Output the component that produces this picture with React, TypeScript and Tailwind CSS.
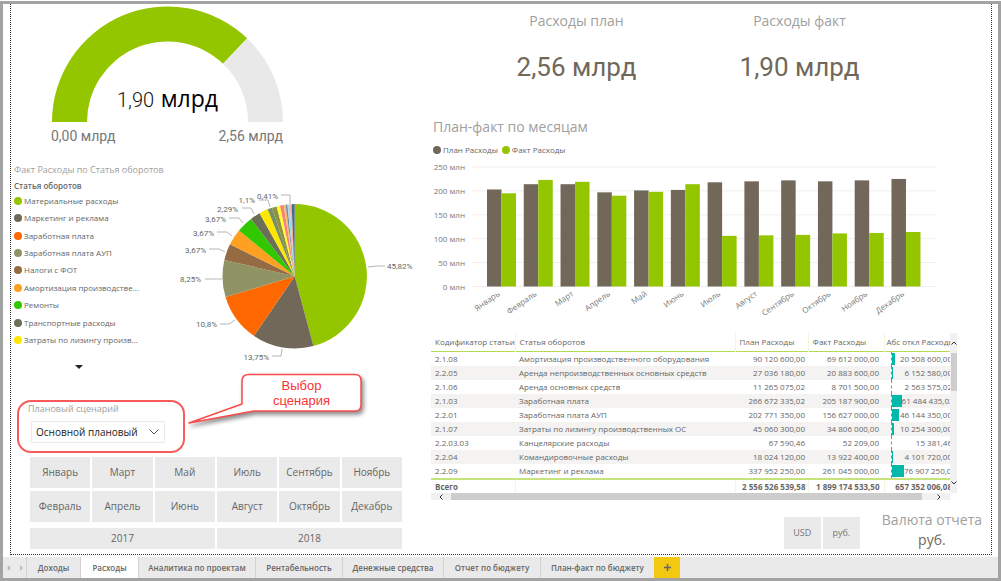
import React from "react";

type Slice = { value: number; color: string };

const slices: Slice[] = [
  { value: 45.82, color: "#94c600" },
  { value: 13.75, color: "#71685a" },
  { value: 10.8, color: "#ff6700" },
  { value: 8.25, color: "#909465" },
  { value: 3.67, color: "#956b43" },
  { value: 3.67, color: "#fea022" },
  { value: 3.67, color: "#32c800" },
  { value: 2.29, color: "#6b6f55" },
  { value: 1.97, color: "#ffe600" },
  { value: 1.02, color: "#759063" },
  { value: 1.07, color: "#91923f" },
  { value: 0.76, color: "#fdfd30" },
  { value: 0.82, color: "#ff7f7c" },
  { value: 0.44, color: "#f2c168" },
  { value: 0.39, color: "#6f8ea6" },
  { value: 0.5, color: "#a5d8ea" },
  { value: 0.44, color: "#f9a99f" },
  { value: 0.67, color: "#4a6a85" },
];

const pieLabels = [
  { text: "45,82%", x: 387, y: 269, anchor: "start", line: "368,267 376,266 385,266" },
  { text: "13,75%", x: 269, y: 360, anchor: "end", line: "282,349 281,356 272,356" },
  { text: "10,8%", x: 217, y: 327, anchor: "end", line: "235,320 229,324 220,324" },
  { text: "8,25%", x: 201, y: 282, anchor: "end", line: "222,279 205,279" },
  { text: "3,67%", x: 206, y: 253, anchor: "end", line: "225,252 219,249 209,249" },
  { text: "3,67%", x: 214, y: 236, anchor: "end", line: "232,236 227,232 217,232" },
  { text: "3,67%", x: 226, y: 222, anchor: "end", line: "243,223 239,218 229,218" },
  { text: "2,29%", x: 238, y: 212, anchor: "end", line: "254,214 251,208 242,208" },
  { text: "1,1%", x: 255, y: 203, anchor: "end", line: "270,207 268,200 259,200" },
  { text: "0,41%", x: 278, y: 199, anchor: "end", line: "290,204 290,195 281,195" },
] as const;

const legend = [
  { name: "Материальные расходы", dot: "bg-[#94c600]" },
  { name: "Маркетинг и реклама", dot: "bg-[#71685a]" },
  { name: "Заработная плата", dot: "bg-[#ff6700]" },
  { name: "Заработная плата АУП", dot: "bg-[#909465]" },
  { name: "Налоги с ФОТ", dot: "bg-[#956b43]" },
  { name: "Амортизация производстве...", dot: "bg-[#fea022]" },
  { name: "Ремонты", dot: "bg-[#32c800]" },
  { name: "Транспортные расходы", dot: "bg-[#6b6f55]" },
  { name: "Затраты по лизингу произв...", dot: "bg-[#ffe600]" },
];

const months = [
  { name: "Январь", plan: 203, fact: 195 },
  { name: "Февраль", plan: 214, fact: 223 },
  { name: "Март", plan: 214, fact: 219 },
  { name: "Апрель", plan: 197, fact: 190 },
  { name: "Май", plan: 201, fact: 198 },
  { name: "Июнь", plan: 202, fact: 214 },
  { name: "Июль", plan: 218, fact: 106 },
  { name: "Август", plan: 220, fact: 107 },
  { name: "Сентябрь", plan: 222, fact: 108 },
  { name: "Октябрь", plan: 220, fact: 111 },
  { name: "Ноябрь", plan: 222, fact: 112 },
  { name: "Декабрь", plan: 225, fact: 114 },
];

const monthButtons = [
  "Январь", "Март", "Май", "Июль", "Сентябрь", "Ноябрь",
  "Февраль", "Апрель", "Июнь", "Август", "Октябрь", "Декабрь",
];

const rows = [
  { code: "2.1.08", name: "Амортизация производственного оборудования", plan: "90 120 600,00", fact: "69 612 000,00", diff: "20 508 600,00", m: 20.5 },
  { code: "2.2.05", name: "Аренда непроизводственных основных средств", plan: "27 036 180,00", fact: "20 883 600,00", diff: "6 152 580,00", m: 6.2 },
  { code: "2.1.06", name: "Аренда основных средств", plan: "11 265 075,02", fact: "8 701 500,00", diff: "2 563 575,02", m: 0 },
  { code: "2.1.03", name: "Заработная плата", plan: "266 672 335,02", fact: "205 187 900,00", diff: "61 484 435,02", m: 61.5 },
  { code: "2.2.01", name: "Заработная плата АУП", plan: "202 771 350,00", fact: "156 627 000,00", diff: "46 144 350,00", m: 46.1 },
  { code: "2.1.07", name: "Затраты по лизингу производственных ОС", plan: "45 060 300,00", fact: "34 806 000,00", diff: "10 254 300,00", m: 10.3 },
  { code: "2.2.03.03", name: "Канцелярские расходы", plan: "67 590,46", fact: "52 209,00", diff: "15 381,46", m: 0 },
  { code: "2.2.04", name: "Командировочные расходы", plan: "18 024 120,00", fact: "13 922 400,00", diff: "4 101 720,00", m: 4.1 },
  { code: "2.2.09", name: "Маркетинг и реклама", plan: "337 952 250,00", fact: "261 045 000,00", diff: "76 907 250,00", m: 76.9 },
];

const tabs = [
  { name: "Доходы", width: "w-[54px]" },
  { name: "Расходы", width: "w-[58px]", active: true },
  { name: "Аналитика по проектам", width: "w-[117px]" },
  { name: "Рентабельность", width: "w-[87px]" },
  { name: "Денежные средства", width: "w-[101px]" },
  { name: "Отчет по бюджету", width: "w-[97px]" },
  { name: "План-факт по бюджету", width: "w-[114px]" },
];

function Gauge() {
  const cx = 167.5;
  const cy = 122;
  const outer = 115.5;
  const inner = 80.5;
  const a = (Math.PI * 46.4) / 180;
  const pt = (r: number, t: number) => `${cx + r * Math.cos(t)} ${cy - r * Math.sin(t)}`;
  const arc = (from: number, to: number) =>
    `M${pt(outer, from)}A${outer} ${outer} 0 0 1 ${pt(outer, to)}L${pt(inner, to)}A${inner} ${inner} 0 0 0 ${pt(inner, from)}Z`;
  return (
    <svg viewBox="11 4 300 156" className="block h-[156px] w-[300px]" role="img" aria-label="Факт 1,90 млрд">
      <path d={arc(Math.PI, a)} fill="#94c600" />
      <path d={arc(a, 0)} fill="#e9e9e9" />
      <text x="117" y="107" className="fill-[#111] font-['Roboto'] text-[20px] font-light">
        1,90
      </text>
      <text x="218" y="107" textAnchor="end" className="fill-black font-['Open_Sans'] text-[23px]">
        млрд
      </text>
      <text x="51" y="141" className="fill-[#777] font-['Roboto'] text-[14px]">
        0,00 млрд
      </text>
      <text x="283" y="141" textAnchor="end" className="fill-[#777] font-['Roboto'] text-[14px]">
        2,56 млрд
      </text>
    </svg>
  );
}

function Pie() {
  const cx = 294.7;
  const cy = 276.3;
  const r = 72.2;
  let acc = 0;
  const at = (p: number) => {
    const t = (p / 100) * 2 * Math.PI;
    return `${cx + r * Math.sin(t)} ${cy - r * Math.cos(t)}`;
  };
  return (
    <svg viewBox="174 180 246 190" className="block h-[190px] w-[246px] shrink-0">
      {slices.map((s, i) => {
        const start = acc;
        acc += s.value;
        return <path key={i} d={`M${cx} ${cy}L${at(start)}A${r} ${r} 0 0 1 ${at(acc)}Z`} fill={s.color} />;
      })}
      {pieLabels.map((l, i) => (
        <g key={i}>
          <polyline points={l.line} fill="none" stroke="#b5b5b5" strokeWidth="1" />
          <text x={l.x} y={l.y} textAnchor={l.anchor} className="fill-[#666] font-['Roboto'] text-[8px]">
            {l.text}
          </text>
        </g>
      ))}
    </svg>
  );
}

function BarChart() {
  const base = 286.5;
  const k = 0.478;
  return (
    <svg viewBox="431 160 520 160" className="block h-[160px] w-[520px]">
      {[0, 50, 100, 150, 200, 250].map((v) => (
        <g key={v}>
          <line x1="472" x2="936" y1={base - v * k} y2={base - v * k} stroke="#efefef" strokeWidth="1" />
          <text x="465" y={base - v * k + 3} textAnchor="end" className="fill-[#777] text-[8px]">
            {v} млн
          </text>
        </g>
      ))}
      {months.map((m, i) => {
        const x = 487 + i * 36.77;
        return (
          <g key={m.name}>
            <rect x={x} y={base - m.plan * k} width="14.5" height={m.plan * k} fill="#71685a" />
            <rect x={x + 14.5} y={base - m.fact * k} width="14.5" height={m.fact * k} fill="#94c600" />
            <text
              textAnchor="end"
              transform={`translate(${x + 13.5} 295) rotate(-35)`}
              className="fill-[#777] text-[8px]"
            >
              {m.name}
            </text>
          </g>
        );
      })}
    </svg>
  );
}

function Card({ title, value }: { title: string; value: string }) {
  return (
    <div className="flex w-[223px] flex-col items-center">
      <h2 className="text-[14px] leading-[20px] text-[#a0a0a0]">{title}</h2>
      <p className="mt-[20px] font-['Roboto'] text-[26px] leading-[32px] text-[#71685a]">{value}</p>
    </div>
  );
}

function Scenario() {
  return (
    <div className="relative mt-[30px] ml-[6px]">
      <div className="h-[53px] w-[168px] rounded-[14px] border-2 border-[#f95a5a] pt-px pl-[9px]">
        <label htmlFor="scenario" className="block text-[9px] leading-[12px] text-[#a0a0a0]">
          Плановый сценарий
        </label>
        <div className="mt-[6px] ml-[3px] grid h-[22px] w-[134px] items-center border border-[#eaeaea]">
          <select
            id="scenario"
            className="col-start-1 row-start-1 h-full w-full appearance-none bg-transparent pl-[4px] text-[10px] text-[#222] outline-none"
          >
            <option>Основной плановый</option>
          </select>
          <svg
            viewBox="0 0 10 6"
            className="pointer-events-none col-start-1 row-start-1 mr-[5px] h-[6px] w-[10px] justify-self-end"
            fill="none"
            stroke="#555"
          >
            <path d="M0.5 0.5L5 5L9.5 0.5" />
          </svg>
        </div>
      </div>
      <div className="absolute -top-[30px] left-[168px] h-[60px] w-[184px]">
        <svg viewBox="185 370 184 60" className="absolute inset-0 h-[60px] w-[184px] drop-shadow-[2px_3px_2px_rgba(0,0,0,0.45)]">
          <path
            d="M249 374.500H355Q361 374.500 361 380.500V405Q361 411 355 411H254L189 423L242 404V381Q242 374.500 249 374.500Z"
            fill="#fff"
            stroke="#f94b4b"
            strokeWidth="1.500"
            strokeLinejoin="round"
          />
        </svg>
        <p className="relative ml-[57px] w-[119px] pt-[8px] text-center font-['Liberation_Sans'] text-[13px] leading-[15px] text-[#f93434]">
          Выбор
          <br />
          сценария
        </p>
      </div>
    </div>
  );
}

function LeftColumn() {
  return (
    <section className="w-[412px] shrink-0">
      <Gauge />
      <div className="pl-[3px]">
        <h2 className="text-[9px] leading-[20px] text-[#a0a0a0]">Факт Расходы по Статья оборотов</h2>
        <div className="flex">
          <div className="w-[160px] shrink-0">
            <h3 className="text-[8px] leading-[12px] font-semibold text-[#666]">Статья оборотов</h3>
            <ul className="grid h-[157px] auto-rows-fr">
              {legend.map((l) => (
                <li key={l.name} className="flex items-center gap-[2px] text-[8px] whitespace-nowrap text-[#666]">
                  <span className={`size-[8px] rounded-full ${l.dot}`} />
                  {l.name}
                </li>
              ))}
            </ul>
            <button type="button" aria-label="Ещё" className="mt-[16px] ml-[61px] block">
              <svg viewBox="0 0 8 4" className="h-[4px] w-[8px]">
                <path d="M0 0H8L4 4Z" fill="#222" />
              </svg>
            </button>
          </div>
          <Pie />
        </div>
      </div>
      <Scenario />
      <div className="mt-[4px] ml-[19px] grid w-[372px] grid-cols-6 gap-x-[2px] gap-y-[3px]">
        {monthButtons.map((m) => (
          <button key={m} type="button" className="h-[31px] bg-[#eaeaea] text-[10px] text-[#666]">
            {m}
          </button>
        ))}
      </div>
      <div className="mt-[6px] ml-[19px] grid w-[372px] grid-cols-2 gap-[2px]">
        {["2017", "2018"].map((y) => (
          <button key={y} type="button" className="h-[21px] bg-[#eaeaea] text-[10px] text-[#666]">
            {y}
          </button>
        ))}
      </div>
    </section>
  );
}

function CostTable() {
  return (
    <div className="w-[526px]">
      <div className="flex h-[160px]">
        <div className="min-w-0 flex-1 overflow-hidden">
          <table className="w-[526px] table-fixed border-collapse text-[8px] whitespace-nowrap text-[#666]">
            <colgroup>
              <col className="w-[84px]" />
              <col className="w-[220px]" />
              <col className="w-[73px]" />
              <col className="w-[76px]" />
              <col className="w-[73px]" />
            </colgroup>
            <thead>
              <tr className="h-[18px] border-b border-[#b5dc50] text-left">
                <th className="border-r border-[#f1f7dd] pl-[4px] font-normal">Кодификатор статьи</th>
                <th className="border-r border-[#f1f7dd] pl-[4px] font-normal">Статья оборотов</th>
                <th className="border-r border-[#f1f7dd] pl-[4px] font-normal">План Расходы</th>
                <th className="border-r border-[#f1f7dd] pl-[4px] font-normal">Факт Расходы</th>
                <th className="pl-[2px] font-normal">Абс откл Расходы</th>
              </tr>
            </thead>
            <tbody>
              {rows.map((r) => (
                <tr key={r.code} className="h-[14px] even:bg-[#f4f3f2]">
                  <td className="pl-[4px] leading-[12px]">{r.code}</td>
                  <td className="pl-[4px] leading-[12px]">{r.name}</td>
                  <td className="pr-[3px] text-right leading-[12px]">{r.plan}</td>
                  <td className="pr-[5px] text-right leading-[12px]">{r.fact}</td>
                  <td className="p-0 pl-[7px]">
                    <div className="flex h-[14px] items-center justify-between border-l border-dashed border-[#888] pr-[5px]">
                      <span className="h-[12px] shrink-0 bg-[#01b8aa]" style={{ width: `${(r.m / 76.9) * 12}px` }} />
                      <span>{r.diff}</span>
                    </div>
                  </td>
                </tr>
              ))}
            </tbody>
            <tfoot>
              <tr className="h-[15px] border-t-2 border-[#c5e37a] font-bold">
                <td className="border-r border-[#f1f7dd] pl-[4px] leading-[12px]">Всего</td>
                <td className="border-r border-[#f1f7dd]" />
                <td className="border-r border-[#f1f7dd] pr-[2px] text-right leading-[12px]">2 556 526 539,58</td>
                <td className="border-r border-[#f1f7dd] pr-[4px] text-right leading-[12px]">1 899 174 533,50</td>
                <td className="pr-[5px] text-right leading-[12px]">657 352 006,08</td>
              </tr>
            </tfoot>
          </table>
        </div>
        <div className="flex w-[7px] shrink-0 flex-col items-center justify-between bg-[#f1f1f1] py-[8px]">
          <svg viewBox="0 0 6 4" className="h-[4px] w-[6px]" fill="none" stroke="#333">
            <path d="M0.500 3.500L3 1L5.500 3.500" />
          </svg>
          <div className="mb-auto mt-[8px] h-[38px] w-[6px] bg-[#cdcdcd]" />
          <svg viewBox="0 0 6 4" className="h-[4px] w-[6px]" fill="none" stroke="#333">
            <path d="M0.500 0.500L3 3L5.500 0.500" />
          </svg>
        </div>
      </div>
      <div className="mr-[7px] flex h-[7px] items-center bg-[#f1f1f1]">
        <svg viewBox="0 0 4 6" className="mx-[8px] h-[6px] w-[4px]" fill="none" stroke="#333">
          <path d="M3.500 0.500L1 3L3.500 5.500" />
        </svg>
        <div className="h-full flex-1 bg-[#cdcdcd]" />
        <svg viewBox="0 0 4 6" className="mr-[9px] ml-[15px] h-[6px] w-[4px]" fill="none" stroke="#333">
          <path d="M0.500 0.500L3 3L0.500 5.500" />
        </svg>
      </div>
    </div>
  );
}

function RightColumn() {
  return (
    <section className="flex min-w-0 flex-1 flex-col pl-[8px]">
      <div className="flex pt-[7px] pl-[34px]">
        <Card title="Расходы план" value="2,56 млрд" />
        <Card title="Расходы факт" value="1,90 млрд" />
      </div>
      <h2 className="mt-[34px] pl-[2px] text-[14px] leading-[20px] text-[#a0a0a0]">План-факт по месяцам</h2>
      <div className="mt-[7px] flex h-[12px] items-center gap-[4px] pl-[2px] text-[8px] text-[#666]">
        <span className="flex items-center gap-[2px]">
          <span className="size-[8px] rounded-full bg-[#71685a]" />
          План Расходы
        </span>
        <span className="flex items-center gap-[2px]">
          <span className="size-[8px] rounded-full bg-[#94c600]" />
          Факт Расходы
        </span>
      </div>
      <div className="mt-[4px]">
        <BarChart />
      </div>
      <div className="mt-[13px]">
        <CostTable />
      </div>
      <div className="mt-[10px] flex justify-end pr-[9px]">
        <div className="mt-[7px] flex gap-[2px]">
          <button type="button" className="h-[32px] w-[37px] bg-[#eaeaea] text-[9px] text-[#777]">
            USD
          </button>
          <button type="button" className="h-[32px] w-[37px] bg-[#eaeaea] text-[9px] text-[#777]">
            руб.
          </button>
        </div>
        <div className="ml-[22px] text-center">
          <p className="text-[14px] leading-[20px] text-[#a0a0a0]">Валюта отчета</p>
          <p className="text-[14px] leading-[20px] text-[#71685a]">руб.</p>
        </div>
      </div>
    </section>
  );
}

export default function App() {
  return (
    <div className="flex min-h-screen flex-col bg-white pt-px font-['Open_Sans','Noto_Sans',sans-serif]">
      <div className="flex flex-1 flex-col border-[3px] border-[#a3a3a3]">
        <main className="mr-[6px] mb-[2px] ml-[7px] flex flex-1 border-x border-b border-dotted border-[#333]">
          <LeftColumn />
          <RightColumn />
        </main>
        <nav className="flex h-[21px] bg-[#eaeaea] text-[8px] font-semibold text-[#666]">
          <div className="flex w-[23px] items-center justify-center gap-[10px]">
            <button type="button" aria-label="Назад">
              <svg viewBox="0 0 3 6" className="h-[6px] w-[3px]">
                <path d="M3 0V6L0 3Z" fill="#bbb" />
              </svg>
            </button>
            <button type="button" aria-label="Вперёд">
              <svg viewBox="0 0 3 6" className="h-[6px] w-[3px]">
                <path d="M0 0V6L3 3Z" fill="#bbb" />
              </svg>
            </button>
          </div>
          {tabs.map((t) => (
            <button
              key={t.name}
              type="button"
              className={`border-l border-[#d2d2d2] whitespace-nowrap ${t.width} ${t.active ? "bg-white" : ""}`}
            >
              {t.name}
            </button>
          ))}
          <button type="button" aria-label="Добавить" className="flex w-[26px] items-center justify-center bg-[#f2c811]">
            <svg viewBox="0 0 7 7" className="size-[7px]" stroke="#666" strokeWidth="1.500">
              <path d="M3.500 0V7M0 3.500H7" />
            </svg>
          </button>
        </nav>
      </div>
    </div>
  );
}
